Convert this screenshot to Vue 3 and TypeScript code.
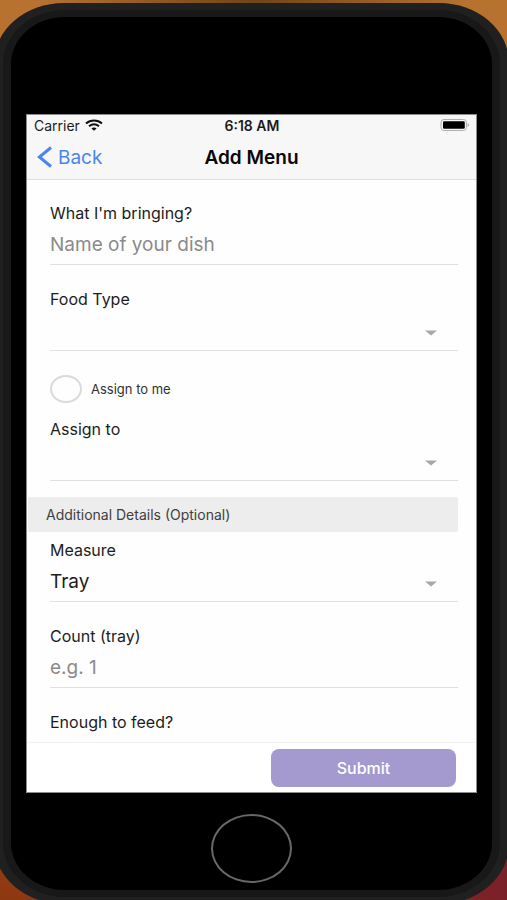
<script setup lang="ts">
import { ref } from 'vue'

const dish = ref('')
const foodType = ref('')
const assignToMe = ref(false)
const assignee = ref('')
const measure = ref('Tray')
const count = ref('')
const feeds = ref('')
</script>

<template>
  <div class="stage">
    <div class="phone">
      <div class="bezel">
        <main class="screen">
          <header class="top">
            <div class="status">
              <div class="carrier">
                <span>Carrier</span>
                <svg class="wifi" viewBox="0 0 18 12" aria-hidden="true">
                  <path d="M1 4.6 C5.6 0.6 12.4 0.6 17 4.6" />
                  <path d="M4 7.3 C7 4.9 11 4.9 14 7.3" />
                  <path class="dot" d="M6.4 9.4 C7.8 8.2 10.2 8.2 11.6 9.4 L9 11.8 Z" />
                </svg>
              </div>
              <span class="time">6:18 AM</span>
              <svg class="battery" viewBox="0 0 30 14" aria-hidden="true">
                <rect class="shell" x="1" y="1.5" width="25.5" height="11" rx="3" />
                <rect x="3" y="3.2" width="21.8" height="7.6" rx="1.2" />
                <path class="cap" d="M27.6 4.8 L29.4 7 L27.6 9.2 Z" />
              </svg>
            </div>
            <nav class="nav">
              <a class="back" href="#">
                <svg viewBox="0 0 16 22" aria-hidden="true"><path d="M14 1.5 L2.4 11 L14 20.5" /></svg>
                <span>Back</span>
              </a>
              <h1>Add Menu</h1>
            </nav>
          </header>

          <form id="menu-form" class="form" @submit.prevent>
            <div class="field">
              <label for="dish">What I'm bringing?</label>
              <input id="dish" v-model="dish" type="text" placeholder="Name of your dish" />
            </div>
            <div class="field">
              <label for="food-type">Food Type</label>
              <div class="select">
                <select id="food-type" v-model="foodType"><option value=""></option></select>
                <svg viewBox="0 0 12 6" aria-hidden="true"><path d="M0 0.5 H12 L6 5.5 Z" /></svg>
              </div>
            </div>
            <div class="check">
              <input id="assign-me" v-model="assignToMe" type="checkbox" />
              <label for="assign-me">Assign to me</label>
            </div>
            <div class="field close">
              <label for="assignee">Assign to</label>
              <div class="select">
                <select id="assignee" v-model="assignee"><option value=""></option></select>
                <svg viewBox="0 0 12 6" aria-hidden="true"><path d="M0 0.5 H12 L6 5.5 Z" /></svg>
              </div>
            </div>
            <h2>Additional Details (Optional)</h2>
            <div class="field near">
              <label for="measure">Measure</label>
              <div class="select">
                <select id="measure" v-model="measure"><option>Tray</option></select>
                <svg viewBox="0 0 12 6" aria-hidden="true"><path d="M0 0.5 H12 L6 5.5 Z" /></svg>
              </div>
            </div>
            <div class="field">
              <label for="count">Count (tray)</label>
              <input id="count" v-model="count" type="text" placeholder="e.g. 1" />
            </div>
            <div class="field">
              <label for="feeds">Enough to feed?</label>
              <input id="feeds" v-model="feeds" type="text" />
            </div>
          </form>

          <footer class="actions">
            <button type="submit" form="menu-form">Submit</button>
          </footer>
        </main>
        <div class="chin">
          <button class="home" type="button" aria-label="Home"></button>
        </div>
      </div>
    </div>
  </div>
</template>

<style>
body {
  margin: 0;
}
</style>

<style scoped>
* {
  box-sizing: border-box;
}
.stage {
  display: flex;
  height: 100vh;
  overflow: hidden;
  font-family: Inter, "Liberation Sans", sans-serif;
  color: #1c1c1c;
  background:
    radial-gradient(ellipse at 50% 0, #704516 0, transparent 60%) top / 100% 60px no-repeat,
    linear-gradient(90deg, transparent 50%, #7a2028 100%) bottom / 100% 50% no-repeat,
    linear-gradient(#b87230 0, #b86c2a 50%, #8e3812 100%);
}
.phone {
  flex: 1;
  display: flex;
  margin: 3px -2px -4px -6px;
  padding: 7px 9px;
  border-radius: 70px / 60px;
  background: #202020;
}
.bezel {
  flex: 1;
  display: flex;
  flex-direction: column;
  min-width: 0;
  padding: 97px 15px 0;
  border: solid #181818;
  border-width: 7px 8px;
  border-radius: 62px / 54px;
  background: #000;
}
.screen {
  flex: 1;
  display: flex;
  flex-direction: column;
  min-height: 0;
  border: 1px solid #8c8c8c;
  background: #fefefe;
}
.top {
  border-bottom: 1px solid #dedede;
  background: #f7f7f7;
}
.status {
  display: grid;
  grid-template-columns: 1fr auto 1fr;
  align-items: center;
  height: 20px;
  padding: 0 6px 0 7px;
  font-size: 14px;
}
.carrier {
  display: flex;
  align-items: center;
  gap: 5px;
}
.wifi {
  width: 18px;
  height: 12px;
  fill: none;
  stroke: #111;
  stroke-width: 2;
}
.wifi .dot {
  fill: #111;
  stroke: none;
}
.time {
  font-weight: 600;
}
.battery {
  justify-self: end;
  width: 30px;
  height: 14px;
}
.battery .shell {
  fill: none;
  stroke: #b0b0b0;
}
.battery .cap {
  fill: #b0b0b0;
}
.nav {
  display: grid;
  grid-template-columns: 1fr auto 1fr;
  align-items: center;
  height: 44px;
  padding: 0 10px;
}
.back {
  display: flex;
  align-items: center;
  gap: 5px;
  color: #4a86ee;
  font-size: 19px;
  text-decoration: none;
}
.back svg {
  width: 16px;
  height: 22px;
  fill: none;
  stroke: currentColor;
  stroke-width: 3;
}
h1 {
  margin: 0;
  color: #080808;
  font-size: 19px;
  font-weight: 600;
}
.form {
  flex: 1;
  min-height: 0;
  padding: 23px 18px 0 23px;
  overflow-y: auto;
  scrollbar-width: none;
}
.field + .field,
.check {
  margin-top: 24px;
}
.field.close {
  margin-top: 16px;
}
.field.near {
  margin-top: 8px;
}
.field label {
  display: block;
  font-size: 16px;
  line-height: 20px;
}
.field input,
.field select {
  display: block;
  width: 100%;
  height: 42px;
  margin: 0;
  padding: 2px 0 0;
  border: 0;
  border-bottom: 1px solid #e0e0e0;
  border-radius: 0;
  outline: 0;
  appearance: none;
  background: transparent;
  color: #1c1c1c;
  font: 19px Inter, "Liberation Sans", sans-serif;
}
.field input::placeholder {
  color: #8a8a8a;
}
.select {
  display: grid;
  align-items: center;
}
.select select,
.select svg {
  grid-area: 1 / 1;
}
.select svg {
  justify-self: end;
  width: 12px;
  height: 6px;
  margin-right: 21px;
  margin-top: 6px;
  fill: #a8a8a8;
  pointer-events: none;
}
.check {
  display: flex;
  align-items: center;
  gap: 9px;
}
.check input {
  width: 32px;
  height: 28px;
  margin: 0;
  border: 2px solid #dadada;
  border-radius: 50%;
  appearance: none;
}
.check input:checked {
  background: #a49ad0;
}
.check label {
  color: #303030;
  font-size: 13px;
}
h2 {
  margin: 16px 0 0 -22px;
  padding: 0 18px;
  border-radius: 2px;
  background: #ededed;
  color: #404040;
  font-size: 14px;
  font-weight: 400;
  line-height: 35px;
}
.actions {
  display: flex;
  justify-content: flex-end;
  padding: 6px 20px 5px;
  border-top: 1px solid #f2f2f2;
  background: #fff;
}
.actions button {
  width: 41%;
  min-width: 185px;
  height: 38px;
  padding: 0;
  border: 0;
  border-radius: 8px;
  background: #a49ad0;
  color: #fff;
  font: 500 16px Inter, "Liberation Sans", sans-serif;
}
.chin {
  display: flex;
  align-items: center;
  justify-content: center;
  height: 97px;
  padding-top: 14px;
}
.home {
  width: 81px;
  height: 69px;
  padding: 0;
  border: 2px solid #686868;
  border-radius: 50%;
  background: transparent;
}
</style>
